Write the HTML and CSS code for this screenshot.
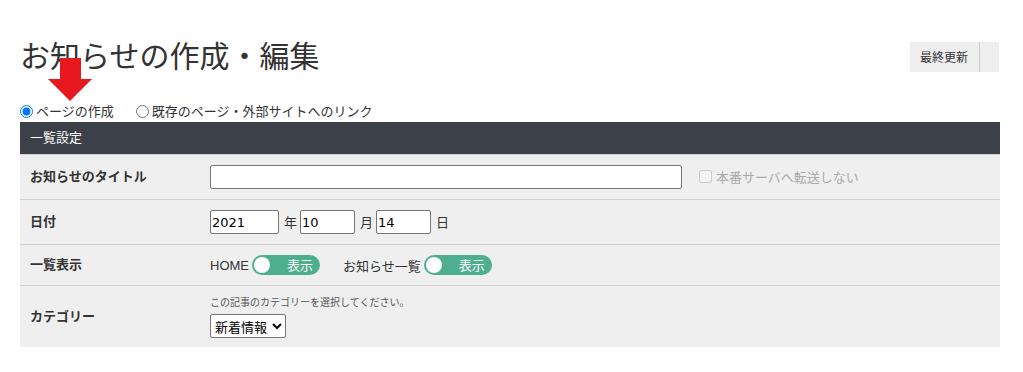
FILE: index.html
```html
<!DOCTYPE html>
<html lang="ja">
<head>
<meta charset="utf-8">
<link rel="stylesheet" href="styles.css">
</head>
<body>
<div class="page">
  <div class="top">
    <h1 class="title">お知らせの作成・編集</h1>
    <div class="update-box">
      <span class="update-label">最終更新</span>
      <span class="update-value"></span>
    </div>
  </div>
  <svg class="arrow" width="44" height="43" viewBox="0 0 44 43">
    <polygon points="12,0 33,0 33,21 44,21 22,43 0,21 12,21" fill="#e8181f"/>
  </svg>
  <div class="mode">
    <label class="mode-item"><input type="radio" name="mode" checked> ページの作成</label>
    <label class="mode-item"><input type="radio" name="mode"> 既存のページ・外部サイトへのリンク</label>
  </div>
  <div class="table">
    <div class="table-head">一覧設定</div>
    <div class="row row-title">
      <div class="label">お知らせのタイトル</div>
      <div class="value">
        <input class="text-input title-input" type="text">
        <label class="no-transfer"><input type="checkbox" disabled> 本番サーバへ転送しない</label>
      </div>
    </div>
    <div class="row row-date">
      <div class="label">日付</div>
      <div class="value date">
        <input class="text-input year" type="text" value="2021">
        <span class="unit">年</span>
        <input class="text-input month" type="text" value="10">
        <span class="unit">月</span>
        <input class="text-input day" type="text" value="14">
        <span class="unit">日</span>
      </div>
    </div>
    <div class="row row-display">
      <div class="label">一覧表示</div>
      <div class="value display">
        <span class="toggle-group"><span class="latin">HOME</span><span class="toggle"><span class="knob"></span><span class="toggle-text">表示</span></span></span>
        <span class="toggle-group"><span>お知らせ一覧</span><span class="toggle"><span class="knob"></span><span class="toggle-text">表示</span></span></span>
      </div>
    </div>
    <div class="row row-category">
      <div class="label">カテゴリー</div>
      <div class="value category">
        <div class="note">この記事のカテゴリーを選択してください。</div>
        <select class="select"><option>新着情報</option></select>
      </div>
    </div>
  </div>
</div>
</body>
</html>
```
FILE: styles.css
```css
* { box-sizing: border-box; }
body {
  margin: 0;
  font-family: "Noto Sans CJK JP", "Noto Sans", sans-serif;
  color: #333;
  background: #fff;
}
.page {
  position: relative;
  padding: 37px 23px 0 20px;
}
.top {
  display: flex;
  justify-content: space-between;
  align-items: flex-start;
}
.title {
  margin: 0;
  font-size: 30px;
  font-weight: 400;
  line-height: 34px;
  color: #333;
}
.update-box {
  display: flex;
  margin-top: 5px;
  height: 30px;
  background: #eee;
  margin-right: 1px;
}
.update-label {
  padding: 0 11px 0 10px;
  font-size: 12px;
  line-height: 29px;
  color: #333;
  border-right: 1px solid #ccc;
}
.update-value {
  width: 19px;
}
.arrow {
  position: absolute;
  left: 48px;
  top: 58px;
}
.mode {
  display: flex;
  align-items: center;
  height: 16px;
  margin-top: 31px;
  gap: 22px;
  font-size: 13px;
  line-height: 16px;
  color: #333;
}
.mode-item {
  display: flex;
  align-items: center;
  gap: 3px;
}
.mode-item input {
  margin: 0;
  width: 13px;
  height: 13px;
}
.table {
  margin-top: 3px;
  background: #efefef;
}
.table-head {
  height: 33px;
  line-height: 30px;
  padding-left: 10px;
  background: #3c4049;
  color: #fff;
  font-size: 13px;
  border-bottom: 1px solid #d6d6d6;
}
.row {
  display: grid;
  grid-template-columns: 190px 1fr;
  border-top: 1px solid #cfcfcf;
  font-size: 13px;
}
.table-head + .row { border-top: none; }
.row-title { height: 44px; }
.row-date { height: 45px; }
.row-display { height: 41px; }
.row-category { height: 62px; }
.label {
  display: flex;
  align-items: center;
  padding-left: 10px;
  padding-bottom: 3px;
  font-weight: 700;
  color: #333;
}
.value {
  display: flex;
  align-items: center;
}
.text-input {
  height: 24px;
  border: 1px solid #767676;
  border-radius: 2px;
  background: #fff;
  font-family: "DejaVu Sans", "Liberation Sans", sans-serif;
  font-size: 13px;
  padding: 0 1px;
  color: #000;
  margin: 0;
}
.title-input { width: 472px; }
.no-transfer {
  display: flex;
  align-items: center;
  gap: 4px;
  margin-left: 17px;
  padding-bottom: 2px;
  color: #aaa;
}
.no-transfer input {
  margin: 0;
  width: 13px;
  height: 13px;
}
.date .unit { margin: 0 3px 0 5px; padding-bottom: 2px; }
.year { width: 69px; }
.month { width: 55px; }
.day { width: 55px; }
.display { gap: 23px; }
.toggle-group {
  display: flex;
  align-items: center;
  gap: 3px;
  font-weight: 400;
}
.latin {
  font-family: "Liberation Sans", "Noto Sans", sans-serif;
  font-size: 13px;
}
.toggle {
  display: flex;
  align-items: center;
  justify-content: space-between;
  width: 68px;
  height: 20px;
  border-radius: 10px;
  background: #4daf8d;
  padding: 0 7px 0 2px;
}
.knob {
  width: 16px;
  height: 16px;
  border-radius: 50%;
  background: #fff;
}
.toggle-text {
  color: #fff;
  font-size: 13px;
  line-height: 18px;
}
.category {
  flex-direction: column;
  align-items: flex-start;
  justify-content: flex-start;
  padding-top: 9px;
}
.note {
  font-size: 10px;
  line-height: 14px;
  color: #555;
}
.select {
  margin-top: 5px;
  height: 24px;
  width: 76px;
  font-family: "Noto Sans CJK JP", sans-serif;
  font-size: 13px;
  color: #000;
  background: #fff;
  border: 1px solid #767676;
  border-radius: 2px;
}
```
